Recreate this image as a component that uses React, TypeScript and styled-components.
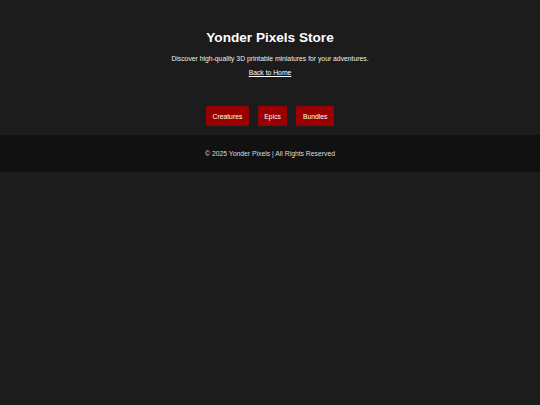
import React from "react";
import styled, { createGlobalStyle } from "styled-components";

const Global = createGlobalStyle`
  html, body { margin: 0; padding: 0; background: #1c1c1c; }
  body { font-family: "Liberation Sans", Arial, sans-serif; color: #fff; }
`;

const Page = styled.div`
  display: flex;
  flex-direction: column;
`;

const Header = styled.header`
  display: flex;
  flex-direction: column;
  align-items: center;
  padding-top: 29px;
`;

const Title = styled.h1`
  margin: 0;
  font-size: 13.6px;
  font-weight: bold;
  line-height: 17px;
`;

const Subtitle = styled.p`
  margin: 9px 0 0;
  font-size: 6.8px;
  line-height: 8px;
  color: #eee;
`;

const HomeLink = styled.a`
  margin-top: 6px;
  font-size: 6.8px;
  line-height: 8px;
  color: #fff;
  text-decoration: underline;
`;

const Nav = styled.nav`
  display: flex;
  justify-content: center;
  gap: 9px;
  margin-top: 29px;
  margin-bottom: 9px;
`;

const NavButton = styled.button`
  background: #990000;
  color: #fff;
  border: none;
  border-radius: 2px;
  height: 20px;
  padding: 0 6.5px;
  font-family: inherit;
  font-size: 6.8px;
  cursor: pointer;
`;

const Footer = styled.footer`
  background: #111111;
  height: 37px;
  display: flex;
  align-items: center;
  justify-content: center;
  font-size: 6.8px;
  color: #ddd;
`;

export default function App() {
  return (
    <Page>
      <Global />
      <Header>
        <Title>Yonder Pixels Store</Title>
        <Subtitle>Discover high-quality 3D printable miniatures for your adventures.</Subtitle>
        <HomeLink href="#">Back to Home</HomeLink>
      </Header>
      <Nav>
        <NavButton>Creatures</NavButton>
        <NavButton>Epics</NavButton>
        <NavButton>Bundles</NavButton>
      </Nav>
      <Footer>© 2025 Yonder Pixels | All Rights Reserved</Footer>
    </Page>
  );
}
